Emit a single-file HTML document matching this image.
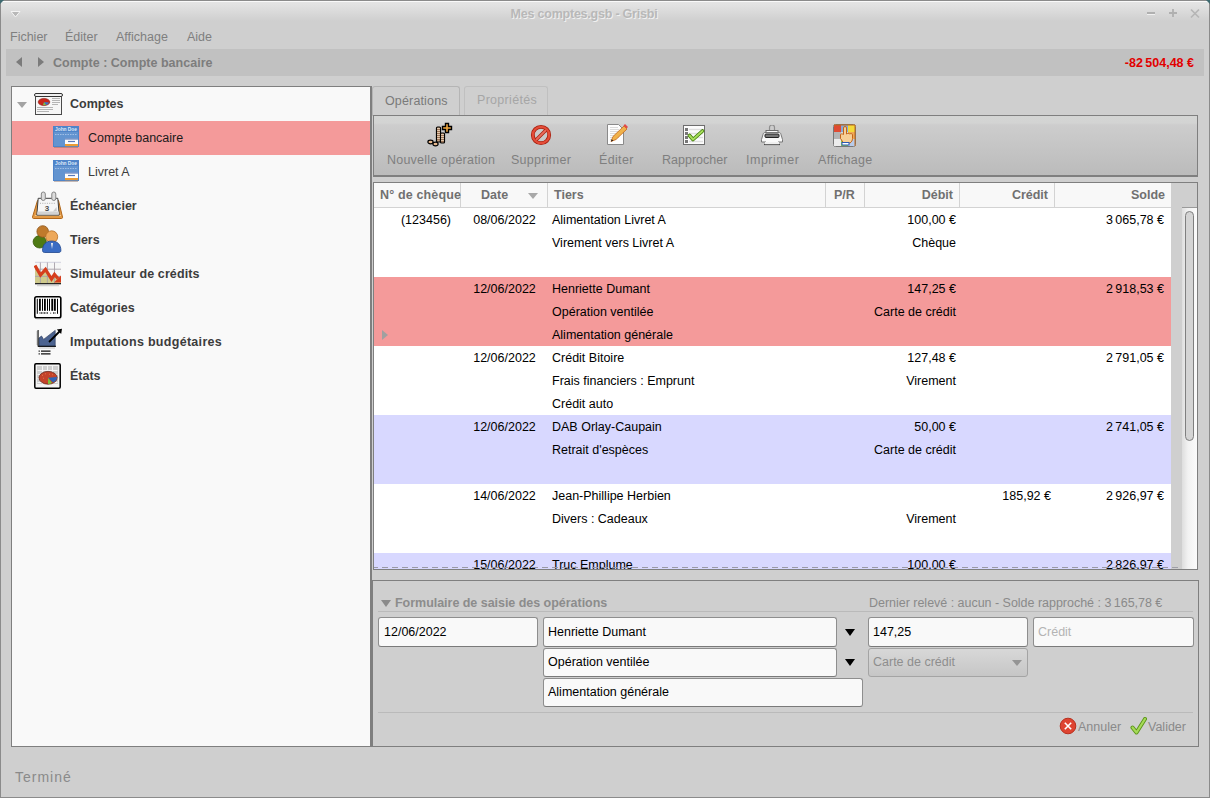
<!DOCTYPE html>
<html><head><meta charset="utf-8">
<style>
*{box-sizing:border-box;margin:0;padding:0}
html,body{width:1210px;height:798px;overflow:hidden}
body{position:relative;background:#cfcfcf;font-family:"Liberation Sans",sans-serif;font-size:12.5px;color:#000}
.a{position:absolute}
.t{position:absolute;white-space:nowrap;height:15px;line-height:15px}
.b{font-weight:bold}
.r{text-align:right}
.c{text-align:center}
.g{color:#7f7f7f}
.e{border:1px solid #8e8e8e;border-bottom-color:#7a7a7a;border-radius:3px;background:#f9f9f9}
</style></head><body>
<!-- window frame -->
<div class="a" style="left:0;top:0;width:1210px;height:22px;background:linear-gradient(#e6e6e6 0,#e2e2e2 5px,#cfcfcf 21px)"></div>
<div class="a" style="left:0;top:1px;width:1210px;height:1px;background:#fafafa"></div>
<div class="a" style="left:0;top:0;width:1210px;height:1px;background:#8b8b8b"></div>
<div class="a" style="left:0;top:0;width:1px;height:798px;background:#8b8b8b"></div>
<div class="a" style="left:1209px;top:0;width:1px;height:798px;background:#8b8b8b"></div>
<div class="a" style="left:0;top:797px;width:1210px;height:1px;background:#8b8b8b"></div>

<!-- title -->
<div class="t b c" style="left:404px;top:7px;width:360px;color:#b8b8b8;text-shadow:1px 1px 0 #f0f0f0;letter-spacing:-0.22px">Mes comptes.gsb - Grisbi</div>

<!-- menu -->
<div class="t g" style="left:10px;top:30px">Fichier</div>
<div class="t g" style="left:65px;top:30px">Éditer</div>
<div class="t g" style="left:116px;top:30px">Affichage</div>
<div class="t g" style="left:187px;top:30px">Aide</div>

<!-- header bar -->
<div class="a" style="left:6px;top:49px;width:1198px;height:27px;background:#c1c1c1"></div>
<div class="t b" style="left:53px;top:56px;color:#7d7d7d;letter-spacing:0.02px">Compte : Compte bancaire</div>
<div class="t b r" style="left:1044px;top:56px;width:150px;color:#e20000">-82&#8201;504,48 €</div>

<!-- sidebar -->
<div class="a" style="left:11px;top:86px;width:361px;height:661px;background:#f9f9f9;border:1px solid #7f7f7f;border-right:2px solid #7f7f7f"></div>
<div class="a" style="left:12px;top:121px;width:358px;height:34px;background:#f49a9a"></div>
<div class="t b" style="left:70px;top:97px;color:#3c3c3c">Comptes</div>
<div class="t" style="left:88px;top:131px;color:#1a1a1a">Compte bancaire</div>
<div class="t" style="left:88px;top:165px;color:#3c3c3c">Livret A</div>
<div class="t b" style="left:70px;top:199px;color:#3c3c3c">Échéancier</div>
<div class="t b" style="left:70px;top:233px;color:#3c3c3c">Tiers</div>
<div class="t b" style="left:70px;top:267px;color:#3c3c3c;letter-spacing:0.12px">Simulateur de crédits</div>
<div class="t b" style="left:70px;top:301px;color:#3c3c3c">Catégories</div>
<div class="t b" style="left:70px;top:335px;color:#3c3c3c;letter-spacing:0.3px">Imputations budgétaires</div>
<div class="t b" style="left:70px;top:369px;color:#3c3c3c">États</div>

<!-- sidebar icons -->
<div class="a" style="left:17px;top:102px;width:0;height:0;border-left:5px solid transparent;border-right:5px solid transparent;border-top:6px solid #a3a3a3"></div>
<svg class="a" style="left:33px;top:92px" width="31" height="24" viewBox="0 0 31 24">
 <rect x="2.5" y="4.5" width="26" height="18" fill="#f6f6f6" stroke="#4a4a4a" stroke-width="1"/>
 <rect x="1.5" y="1.5" width="28" height="3" rx="1.5" fill="#f0f0f0" stroke="#333" stroke-width="1"/>
 <ellipse cx="11" cy="10" rx="5.8" ry="3.6" fill="#c8261c" stroke="#8a1a10" stroke-width="0.6"/>
 <path d="M11 10l5 0.5a5 3 0 0 1-3 2.5z" fill="#3a78c8"/>
 <path d="M11 10l2 3a5 3 0 0 1-3 0z" fill="#7cc04a"/>
 <path d="M19 6.5h8M19 8.5h8M19 10.5h8M19 12.5h6M4 15.5h16M4 17.5h16M4 19.5h12" stroke="#9a9a9a" stroke-width="0.7"/>
</svg>
<svg class="a" style="left:52px;top:125px" width="28" height="24" viewBox="0 0 28 24">
 <rect x="1" y="1" width="26" height="21" fill="#4f84c9"/>
 <rect x="2" y="7" width="24" height="14" fill="#6394d0"/>
 <text x="3" y="6.2" textLength="22" lengthAdjust="spacingAndGlyphs" font-family="Liberation Sans" font-size="6" font-weight="bold" fill="#dfeaf8">John Doe</text>
 <path d="M3 9.5h22" stroke="#a8c4ea" stroke-width="0.9" stroke-dasharray="1.5 1"/>
 <rect x="13" y="13.5" width="13" height="5.5" fill="#fdfdfd"/>
 <rect x="13" y="13.5" width="13" height="1" fill="#3a64b0"/>
 <path d="M16 16.5h7" stroke="#5a7ab8" stroke-width="1.2"/>
 <rect x="13" y="19" width="13" height="2.2" fill="#eb9c34"/>
 <path d="M2 22.5h24" stroke="#8a6a60" stroke-width="1" opacity="0.45"/>
</svg>
<svg class="a" style="left:52px;top:159px" width="28" height="24" viewBox="0 0 28 24">
 <rect x="1" y="1" width="26" height="21" fill="#4f84c9"/>
 <rect x="2" y="7" width="24" height="14" fill="#6394d0"/>
 <text x="3" y="6.2" textLength="22" lengthAdjust="spacingAndGlyphs" font-family="Liberation Sans" font-size="6" font-weight="bold" fill="#dfeaf8">John Doe</text>
 <path d="M3 9.5h22" stroke="#a8c4ea" stroke-width="0.9" stroke-dasharray="1.5 1"/>
 <rect x="13" y="13.5" width="13" height="5.5" fill="#fdfdfd"/>
 <rect x="13" y="13.5" width="13" height="1" fill="#3a64b0"/>
 <path d="M16 16.5h7" stroke="#5a7ab8" stroke-width="1.2"/>
 <rect x="13" y="19" width="13" height="2.2" fill="#eb9c34"/>
 <path d="M2 22.5h24" stroke="#8a6a60" stroke-width="1" opacity="0.45"/>
</svg>
<svg class="a" style="left:32px;top:191px" width="32" height="29" viewBox="0 0 32 29">
 <path d="M5.5 9.5h21l4 16.5c0.2 1-0.3 1.5-1.2 1.5h-27.6c-0.9 0-1.4-0.5-1.2-1.5z" fill="#e39a45" stroke="#b0661a" stroke-width="1"/>
 <path d="M3 24.5h26" stroke="#f4c78a" stroke-width="1"/>
 <path d="M6.2 7.3h19.6l1.4 16.8h-22.4z" fill="#f6f6f6" stroke="#3e3e3e" stroke-width="1"/>
 <path d="M5.5 20.5h21.3l0.3 3h-22z" fill="#d2d2d2"/>
 <path d="M24.5 16l-3.5 4.5l3.8-0.5z" fill="#c8c8c8"/>
 <path d="M8 12.3h16" stroke="#9a9a9a" stroke-width="0.8" stroke-dasharray="1 1.3"/>
 <rect x="9.3" y="1" width="4" height="8.5" rx="2" fill="#dcdcdc" stroke="#858585" stroke-width="1"/>
 <rect x="19.8" y="1" width="4" height="8.5" rx="2" fill="#dcdcdc" stroke="#858585" stroke-width="1"/>
 <text x="12.8" y="19.6" font-family="Liberation Sans" font-size="8" font-weight="bold" fill="#4a4a4a">3</text>
</svg>
<svg class="a" style="left:32px;top:224px" width="30" height="30" viewBox="0 0 30 30">
 <ellipse cx="7.7" cy="17.8" rx="6.6" ry="6.2" fill="#4e7a14" stroke="#3b5c0c" stroke-width="0.8"/>
 <circle cx="10.7" cy="7.5" r="5.8" fill="#c07a2c" stroke="#8e5418" stroke-width="0.8"/>
 <circle cx="19.7" cy="12.8" r="6" fill="#eda85a" stroke="#b86e22" stroke-width="0.8"/>
 <path d="M10.5 26.5c0-6 3.5-9.5 9.2-9.5s9.2 3.5 9.2 9.5c0 1.2-0.8 2-2 2h-14.4c-1.2 0-2-0.8-2-2z" fill="#3a6cc4" stroke="#20468e" stroke-width="0.8"/>
 <path d="M19 19l1 6l1-6z" fill="#f0f0f0"/>
</svg>
<svg class="a" style="left:34px;top:261px" width="28" height="26" viewBox="0 0 28 26">
 <rect x="1" y="1" width="26" height="21.5" fill="#f6f6f6"/>
 <path d="M1 6L6.5 15L11.5 9L17.5 18.5L20.5 14L27 20V22.5H1z" fill="#cfca8c"/>
 <path d="M1 8.2h26M1 15.4h26M6.4 1v21.5M13.4 1v21.5M20.5 1v21.5" stroke="#a8a0a8" stroke-width="0.9"/>
 <path d="M1 1.3h26" stroke="#c8c8d8" stroke-width="0.8"/>
 <path d="M1 4.5L6.5 14L11.5 8.5L17.5 18L20.5 13.5L24 17.5" fill="none" stroke="#d63d1c" stroke-width="3.2" stroke-linejoin="miter"/>
 <path d="M27 14.5V21.5H20z" fill="#d63d1c"/>
 <path d="M1 22.7h26" stroke="#111" stroke-width="1.2"/>
 <path d="M3 24.5h22" stroke="#bbb" stroke-width="1.5" opacity="0.6"/>
</svg>
<svg class="a" style="left:33px;top:295px" width="30" height="25" viewBox="0 0 30 25">
 <rect x="1.8" y="1.8" width="26" height="21" rx="1.8" fill="#fdfdfd" stroke="#000" stroke-width="1.6"/>
 <g fill="#000">
  <rect x="3.8" y="3.8" width="1" height="15"/>
  <rect x="6" y="3.8" width="1.8" height="12"/>
  <rect x="9" y="3.8" width="1" height="12"/>
  <rect x="11" y="3.8" width="1.8" height="12"/>
  <rect x="14" y="3.8" width="1" height="12"/>
  <rect x="16" y="3.8" width="1" height="12"/>
  <rect x="18.3" y="3.8" width="1.9" height="12"/>
  <rect x="21" y="3.8" width="1.8" height="12"/>
  <rect x="24" y="3.8" width="1" height="15"/>
 </g>
 <path d="M6.5 18h9M17.5 18.2h0.6M20 18h3" stroke="#333" stroke-width="1.6" stroke-dasharray="1 0.5"/>
 <path d="M3.5 24h24" stroke="#aaa" stroke-width="1" opacity="0.5"/>
</svg>
<svg class="a" style="left:35px;top:328px" width="28" height="28" viewBox="0 0 28 28">
 <path d="M4 18.3V10L6.5 8L8.6 11.4L20.2 2.4V18.3z" fill="#4c6390" stroke="#2c3c60" stroke-width="0.7"/>
 <path d="M3.1 2v16.6M3 18.3h18" stroke="#000" stroke-width="1"/>
 <path d="M1.5 4h1.5M1.5 6h1.5M1.5 8h1.5M1.5 10h1.5M1.5 12h1.5M1.5 14h1.5M1.5 16h1.5M5 19.5v1M7 19.5v1M9 19.5v1M11 19.5v1M13 19.5v1M15 19.5v1M17 19.5v1M19 19.5v1" stroke="#222" stroke-width="0.5"/>
 <path d="M14 14L24.5 3.5" stroke="#000" stroke-width="1.8"/>
 <path d="M27 0.7L21.8 1.5L26.2 5.9z" fill="#000"/>
 <path d="M6 23.1h9.5M6 25.9h9.5" stroke="#111" stroke-width="1.1"/>
 <path d="M3.5 23.1h1.5M3.5 25.9h1.5" stroke="#444" stroke-width="1.4"/>
</svg>
<svg class="a" style="left:33px;top:362px" width="29" height="28" viewBox="0 0 29 28">
 <rect x="1.8" y="1.8" width="25.4" height="24.4" rx="1.2" fill="#f4f4f4" stroke="#000" stroke-width="1.5"/>
 <rect x="4" y="4" width="21" height="18" fill="#cfcfcf"/>
 <path d="M4.5 8.5h20M4.5 12.5h20M4.5 16.5h20M4.5 20.5h20M9.5 4v18M14.5 4v18M19.5 4v18" stroke="#f4f4f4" stroke-width="1"/>
 <ellipse cx="15.1" cy="15.8" rx="9.1" ry="6.4" fill="#c4432a" stroke="#6a2418" stroke-width="0.8"/>
 <path d="M15.1 15.8L24 15a9 6.3 0 0 1-4 5.5z" fill="#2e64b8"/>
 <path d="M15.1 15.8L19 21a9 6.3 0 0 1-4 1.1z" fill="#7cc23c"/>
 <path d="M9 13l1 0.5M12 11.5l0.8 0.5M10 16l0.8 0.4M16 12l0.8 0.4M19 12.5l0.8 0.4" stroke="#f08a5a" stroke-width="0.8"/>
</svg>
<!-- header arrows -->
<div class="a" style="left:16px;top:57px;width:0;height:0;border-top:5px solid transparent;border-bottom:5px solid transparent;border-right:6px solid #7b7b7b"></div>
<div class="a" style="left:38px;top:57px;width:0;height:0;border-top:5px solid transparent;border-bottom:5px solid transparent;border-left:6px solid #7b7b7b"></div>
<!-- title bar glyphs -->
<svg class="a" style="left:10px;top:10px" width="11" height="9" viewBox="0 0 11 9">
 <path d="M1 1.5h9l-4.5 5.5z" fill="#b8b8b8" stroke="#f4f4f4" stroke-width="1"/>
</svg>
<svg class="a" style="left:1146px;top:8px" width="56" height="11" viewBox="0 0 56 11">
 <path d="M1 5h8" stroke="#b0b0b0" stroke-width="2"/>
 <path d="M1 6.5h8" stroke="#f0f0f0" stroke-width="1"/>
 <path d="M23 5h8M27 1v8" stroke="#b0b0b0" stroke-width="1.8"/>
 <path d="M45 1.5l8 8M53 1.5l-8 8" stroke="#b5b5b5" stroke-width="1.6"/>
</svg>
<svg class="a" style="left:0;top:0" width="5" height="5" viewBox="0 0 5 5"><path d="M0 0h4l-4 4z" fill="#3f6a70"/></svg>
<svg class="a" style="left:1205px;top:0" width="5" height="5" viewBox="0 0 5 5"><path d="M1 0h4v4z" fill="#3f6a70"/></svg>
<!-- form icons -->
<svg class="a" style="left:1059px;top:717px" width="18" height="18" viewBox="0 0 18 18">
 <circle cx="9" cy="9" r="7.8" fill="#de4431" stroke="#b8301e" stroke-width="1"/>
 <path d="M5.8 5.8l6.4 6.4M12.2 5.8l-6.4 6.4" stroke="#fff" stroke-width="1.6"/>
</svg>
<svg class="a" style="left:1130px;top:717px" width="17" height="18" viewBox="0 0 17 18">
 <path d="M2.5 10.5l4 5l8.5-13.5" fill="none" stroke="#5a9418" stroke-width="4" stroke-linejoin="round" stroke-linecap="round"/>
 <path d="M2.5 10.5l4 5l8.5-13.5" fill="none" stroke="#a6da58" stroke-width="2.2" stroke-linejoin="round" stroke-linecap="round"/>
</svg>

<!-- right panel -->
<div class="a" style="left:372px;top:86px;width:88px;height:30px;border:1px solid #b5b5b5;border-bottom:none;border-radius:3px 3px 0 0"></div>
<div class="a" style="left:464px;top:86px;width:84px;height:29px;border:1px solid #c0c0c0;border-bottom:none;border-radius:3px 3px 0 0"></div>
<div class="t" style="left:385px;top:94px;color:#7a7a7a;letter-spacing:0.15px">Opérations</div>
<div class="t" style="left:477px;top:93px;color:#a6a6a6;letter-spacing:0.3px">Propriétés</div>

<!-- toolbar -->
<div class="a" style="left:373px;top:115px;width:825px;height:62px;border:1px solid #7f7f7f;border-bottom:2px solid #7f7f7f;background:linear-gradient(#d4d5d4 0,#d3d4d3 7px,#cdcdcd 9px,#bbbbbb 100%)"></div>
<div class="t g" style="left:387px;top:153px;letter-spacing:0.22px">Nouvelle opération</div>
<div class="t g" style="left:511px;top:153px;letter-spacing:0.28px">Supprimer</div>
<div class="t g" style="left:599px;top:153px;letter-spacing:0.35px">Éditer</div>
<div class="t g" style="left:662px;top:153px">Rapprocher</div>
<div class="t g" style="left:746px;top:153px;letter-spacing:0.5px">Imprimer</div>
<div class="t g" style="left:818px;top:153px;letter-spacing:0.3px">Affichage</div>

<!-- toolbar icons -->
<svg class="a" style="left:426px;top:120px" width="28" height="28" viewBox="0 0 28 28">
 <g stroke="#000" stroke-width="1.2">
  <rect x="10.5" y="7" width="4" height="15" rx="1" fill="#c9a27e"/>
  <rect x="14.5" y="13" width="4" height="10" rx="1" fill="#c9a27e"/>
  <ellipse cx="4.5" cy="22" rx="2.6" ry="1.8" fill="#e7b88c"/>
  <ellipse cx="9.5" cy="24" rx="2.6" ry="1.8" fill="#e7b88c"/>
  <path d="M19.5 3.5h3v3h3v3h-3v3h-3v-3h-3v-3h3z" fill="#f0a840" stroke-width="1.4"/>
 </g>
 <g stroke="#8a6248" stroke-width="0.7">
  <path d="M11 9.5h3M11 11.5h3M11 13.5h3M11 15.5h3M11 17.5h3M11 19.5h3M15 15.5h3M15 17.5h3M15 19.5h3M15 21.5h3"/>
 </g>
 <g stroke="#f6e6d0" stroke-width="0.6">
  <path d="M11 8.5h3M11 10.5h3M11 12.5h3M11 14.5h3M11 16.5h3M11 18.5h3M15 14.5h3M15 16.5h3M15 18.5h3M15 20.5h3"/>
 </g>
</svg>
<svg class="a" style="left:530px;top:124px" width="22" height="22" viewBox="0 0 22 22">
 <circle cx="11" cy="11" r="8.2" fill="none" stroke="#a8200f" stroke-width="3.8"/>
 <circle cx="11" cy="11" r="8.2" fill="none" stroke="#e44c38" stroke-width="2.2"/>
 <path d="M16 6L6 16" stroke="#a8200f" stroke-width="3.4"/>
 <path d="M16 6L6 16" stroke="#ea6a5c" stroke-width="1.8"/>
</svg>
<svg class="a" style="left:606px;top:123px" width="22" height="23" viewBox="0 0 22 23">
 <path d="M1.5 1.5h11l5 5v15h-16z" fill="#fdfdfd" stroke="#8a8a8a" stroke-width="1"/>
 <path d="M4 4.5h8M4 6.5h9M4 8.5h9M4 10.5h9M4 12.5h9M4 14.5h9M4 16.5h6" stroke="#c4c4c4" stroke-width="0.6"/>
 <path d="M5 18.5l2-5l11-10.5l3 3l-11 10.5z" fill="#f0b24a" stroke="#c4661a" stroke-width="0.8"/>
 <path d="M17.5 2.5l1.5-1.5l3 3l-1.5 1.5z" fill="#e34848"/>
 <path d="M5 18.5l0.8-2.2l1.4 1.4z" fill="#111"/>
</svg>
<svg class="a" style="left:683px;top:125px" width="22" height="20" viewBox="0 0 22 20">
 <rect x="0.5" y="0.5" width="21" height="19" fill="#fcfcfc" stroke="#6e6e6e" stroke-width="1"/>
 <path d="M6 4.5h14M6 8.5h14M6 12.5h14M6 16.5h14" stroke="#dedede" stroke-width="1.5"/>
 <rect x="2" y="3" width="3" height="3" fill="#777"/>
 <rect x="2" y="7" width="3" height="3" fill="#777"/>
 <rect x="2" y="11" width="3" height="3" fill="#777"/>
 <rect x="2" y="15" width="3" height="3" fill="#777"/>
 <path d="M6.5 10.5l3.5 4l9.5-8.5" fill="none" stroke="#3f7a06" stroke-width="3.6" stroke-linecap="round" stroke-linejoin="round"/>
 <path d="M6.5 10.5l3.5 4l9.5-8.5" fill="none" stroke="#a6dd5c" stroke-width="2" stroke-linecap="round" stroke-linejoin="round"/>
</svg>
<svg class="a" style="left:760px;top:125px" width="24" height="21" viewBox="0 0 24 21">
 <path d="M9.5 5V2.5a2.5 2.5 0 0 1 5 0V5" fill="none" stroke="#8f8f8f" stroke-width="1.2"/>
 <rect x="6" y="5.5" width="12" height="5" fill="#fafafa" stroke="#6a6a6a" stroke-width="1"/>
 <path d="M3 9.5c0-1 1-2 2-2h14c1 0 2 1 2 2l1.5 5v2.5h-21v-2.5z" fill="#f8f8f8" stroke="#777" stroke-width="1"/>
 <rect x="5" y="9" width="14" height="3.5" rx="1" fill="#777" stroke="#222" stroke-width="1"/>
 <rect x="6" y="15" width="12" height="2" fill="#fafafa"/>
 <path d="M4 19.5h16" stroke="#4a4a4a" stroke-width="1.2"/>
 <rect x="5" y="17" width="14" height="2.2" fill="#f0f0f0"/>
</svg>
<svg class="a" style="left:833px;top:124px" width="23" height="23" viewBox="0 0 23 23">
 <rect x="0.5" y="0.5" width="22" height="22" rx="2" fill="#f0f0f0" stroke="#777" stroke-width="1"/>
 <rect x="1" y="1" width="7" height="7" fill="#df4a32"/>
 <rect x="8" y="1" width="7" height="7" fill="#86a9d8"/>
 <rect x="15" y="1" width="7" height="7" fill="#f3d93a"/>
 <rect x="1" y="8" width="7" height="7" fill="#b4b4b4"/>
 <rect x="8" y="8" width="7" height="7" fill="#d8d8d8"/>
 <rect x="15" y="8" width="7" height="7" fill="#f0a858"/>
 <rect x="1" y="15" width="7" height="7" fill="#ececec"/>
 <rect x="8" y="15" width="7" height="7" fill="#8fd050"/>
 <rect x="15" y="15" width="7" height="7" fill="#b8ccec"/>
 <path d="M1 1h21M22 1v21" stroke="#c06a1a" stroke-width="1" fill="none"/>
 <path d="M10.5 4a1.5 1.5 0 0 1 3 0v6c0.8-0.8 3-0.8 3 0c0.8-0.6 3-0.4 3 0.5v4c0 2-1 3.5-2.5 4.5h-6.5l-3-4.5v-4c0.5-0.8 1.5-0.8 3 0z" fill="#f6cf97" stroke="#c3651a" stroke-width="1"/>
 <rect x="9" y="18.5" width="7" height="2.5" fill="#fff" stroke="#2958b4" stroke-width="1"/>
</svg>

<!-- table -->
<div class="a" style="left:373px;top:182px;width:825px;height:388px;border:1px solid #7f7f7f;background:#cfcfcf"></div>
<div class="a" style="left:374px;top:183px;width:797px;height:386px;background:#fff;overflow:hidden">
<div class="a" style="left:0;top:25px;width:797px;height:69px;background:#ffffff"></div>
<div class="t r" style="left:0;top:30px;width:77px">(123456)</div>
<div class="t c" style="left:87px;top:30px;width:87px">08/06/2022</div>
<div class="t" style="left:178px;top:30px">Alimentation Livret A</div>
<div class="t r" style="left:482px;top:30px;width:100px">100,00 €</div>
<div class="t r" style="left:690px;top:30px;width:100px">3 065,78 €</div>
<div class="t" style="left:178px;top:53px">Virement vers Livret A</div>
<div class="t r" style="left:482px;top:53px;width:100px">Chèque</div>
<div class="a" style="left:0;top:94px;width:797px;height:69px;background:#f49a9a"></div>
<div class="t c" style="left:87px;top:99px;width:87px">12/06/2022</div>
<div class="t" style="left:178px;top:99px">Henriette Dumant</div>
<div class="t r" style="left:482px;top:99px;width:100px">147,25 €</div>
<div class="t r" style="left:690px;top:99px;width:100px">2 918,53 €</div>
<div class="t" style="left:178px;top:122px">Opération ventilée</div>
<div class="t r" style="left:482px;top:122px;width:100px">Carte de crédit</div>
<div class="t" style="left:178px;top:145px">Alimentation générale</div>
<div class="a" style="left:0;top:163px;width:797px;height:69px;background:#ffffff"></div>
<div class="t c" style="left:87px;top:168px;width:87px">12/06/2022</div>
<div class="t" style="left:178px;top:168px">Crédit Bitoire</div>
<div class="t r" style="left:482px;top:168px;width:100px">127,48 €</div>
<div class="t r" style="left:690px;top:168px;width:100px">2 791,05 €</div>
<div class="t" style="left:178px;top:191px">Frais financiers : Emprunt</div>
<div class="t r" style="left:482px;top:191px;width:100px">Virement</div>
<div class="t" style="left:178px;top:214px">Crédit auto</div>
<div class="a" style="left:0;top:232px;width:797px;height:69px;background:#d8d8ff"></div>
<div class="t c" style="left:87px;top:237px;width:87px">12/06/2022</div>
<div class="t" style="left:178px;top:237px">DAB Orlay-Caupain</div>
<div class="t r" style="left:482px;top:237px;width:100px">50,00 €</div>
<div class="t r" style="left:690px;top:237px;width:100px">2 741,05 €</div>
<div class="t" style="left:178px;top:260px">Retrait d'espèces</div>
<div class="t r" style="left:482px;top:260px;width:100px">Carte de crédit</div>
<div class="a" style="left:0;top:301px;width:797px;height:69px;background:#ffffff"></div>
<div class="t c" style="left:87px;top:306px;width:87px">14/06/2022</div>
<div class="t" style="left:178px;top:306px">Jean-Phillipe Herbien</div>
<div class="t r" style="left:577px;top:306px;width:100px">185,92 €</div>
<div class="t r" style="left:690px;top:306px;width:100px">2 926,97 €</div>
<div class="t" style="left:178px;top:329px">Divers : Cadeaux</div>
<div class="t r" style="left:482px;top:329px;width:100px">Virement</div>
<div class="a" style="left:0;top:370px;width:797px;height:69px;background:#d8d8ff"></div>
<div class="t c" style="left:87px;top:375px;width:87px">15/06/2022</div>
<div class="t" style="left:178px;top:375px">Truc Emplume</div>
<div class="t r" style="left:482px;top:375px;width:100px">100,00 €</div>
<div class="t r" style="left:690px;top:375px;width:100px">2 826,97 €</div>
<div class="a" style="left:0;top:384px;width:797px;height:1px;background:repeating-linear-gradient(90deg,#9a9aa6 0 4px,transparent 4px 8px,#9a9aa6 8px 10px)"></div>
<div class="a" style="left:8px;top:147px;width:0;height:0;border-top:5px solid transparent;border-bottom:5px solid transparent;border-left:6px solid #a0a0a0"></div>
</div>
<!-- table header -->
<div class="a" style="left:374px;top:183px;width:797px;height:25px;background:#f8f8f8;border-bottom:1px solid #d3d3d3"></div>
<div class="a" style="left:460px;top:183px;width:1px;height:24px;background:#d3d3d3"></div>
<div class="a" style="left:547px;top:183px;width:1px;height:24px;background:#d3d3d3"></div>
<div class="a" style="left:825px;top:183px;width:1px;height:24px;background:#d3d3d3"></div>
<div class="a" style="left:864px;top:183px;width:1px;height:24px;background:#d3d3d3"></div>
<div class="a" style="left:959px;top:183px;width:1px;height:24px;background:#d3d3d3"></div>
<div class="a" style="left:1054px;top:183px;width:1px;height:24px;background:#d3d3d3"></div>
<div class="t b" style="left:380px;top:188px;color:#707070;letter-spacing:0.15px">N° de chèque</div>
<div class="t b" style="left:481px;top:188px;color:#707070">Date</div>
<div class="a" style="left:528px;top:193px;width:0;height:0;border-left:5px solid transparent;border-right:5px solid transparent;border-top:6px solid #a8a8a8"></div>
<div class="t b" style="left:554px;top:188px;color:#707070">Tiers</div>
<div class="t b" style="left:834px;top:188px;color:#707070">P/R</div>
<div class="t b r" style="left:853px;top:188px;width:100px;color:#707070">Débit</div>
<div class="t b r" style="left:948px;top:188px;width:100px;color:#707070">Crédit</div>
<div class="t b r" style="left:1065px;top:188px;width:100px;color:#707070">Solde</div>
<!-- scrollbar -->
<div class="a" style="left:1172px;top:567px;width:6px;height:1px;background:#a0a0a8"></div>
<div class="a" style="left:1182px;top:207px;width:15px;height:362px;background:linear-gradient(90deg,#dedede,#f2f2f2 40%,#fbfbfb);border-top:1px solid #9a9a9a"></div>
<div class="a" style="left:1185px;top:211px;width:9px;height:230px;background:#d4d4d4;border:1px solid #7f7f7f;border-radius:5px"></div>

<!-- form -->
<div class="a" style="left:372px;top:580px;width:827px;height:167px;border:1px solid #7f7f7f"></div>
<div class="a" style="left:381px;top:600px;width:0;height:0;border-left:5px solid transparent;border-right:5px solid transparent;border-top:7px solid #8a8a8a"></div>
<div class="t b" style="left:395px;top:596px;color:#8c8c8c;letter-spacing:-0.03px">Formulaire de saisie des opérations</div>
<div class="t" style="left:869px;top:596px;color:#8a8a8a;letter-spacing:-0.02px">Dernier relevé : aucun - Solde rapproché : 3&#8201;165,78 €</div>
<div class="a" style="left:378px;top:611px;width:815px;height:1px;background:#bababa"></div>
<div class="a e" style="left:378px;top:617px;width:160px;height:30px"></div>
<div class="a e" style="left:543px;top:617px;width:294px;height:30px"></div>
<div class="a e" style="left:868px;top:617px;width:160px;height:30px"></div>
<div class="a e" style="left:1033px;top:617px;width:161px;height:30px"></div>
<div class="a e" style="left:543px;top:648px;width:294px;height:29px"></div>
<div class="a" style="left:868px;top:648px;width:160px;height:29px;border:1px solid #a4a4a4;border-radius:3px;background:linear-gradient(#d8d8d8,#c6c6c6)"></div>
<div class="a e" style="left:543px;top:678px;width:320px;height:29px"></div>
<div class="a" style="left:845px;top:629px;width:0;height:0;border-left:5.5px solid transparent;border-right:5.5px solid transparent;border-top:7px solid #000"></div>
<div class="a" style="left:845px;top:659px;width:0;height:0;border-left:5.5px solid transparent;border-right:5.5px solid transparent;border-top:7px solid #000"></div>
<div class="a" style="left:1012px;top:660px;width:0;height:0;border-left:5.5px solid transparent;border-right:5.5px solid transparent;border-top:6px solid #959595"></div>
<div class="t" style="left:384px;top:625px">12/06/2022</div>
<div class="t" style="left:548px;top:625px">Henriette Dumant</div>
<div class="t" style="left:873px;top:625px">147,25</div>
<div class="t" style="left:1038px;top:625px;color:#b4b4b4">Crédit</div>
<div class="t" style="left:548px;top:655px">Opération ventilée</div>
<div class="t" style="left:873px;top:655px;color:#8e8e8e">Carte de crédit</div>
<div class="t" style="left:548px;top:685px">Alimentation générale</div>
<div class="a" style="left:378px;top:712px;width:815px;height:1px;background:#bababa"></div>
<div class="t" style="left:1078px;top:720px;color:#8a8a8a">Annuler</div>
<div class="t" style="left:1148px;top:720px;color:#8a8a8a">Valider</div>
<!-- status -->
<div class="t" style="left:15px;top:770px;font-size:14px;letter-spacing:1px;color:#8a8a8a">Terminé</div>
</body></html>
